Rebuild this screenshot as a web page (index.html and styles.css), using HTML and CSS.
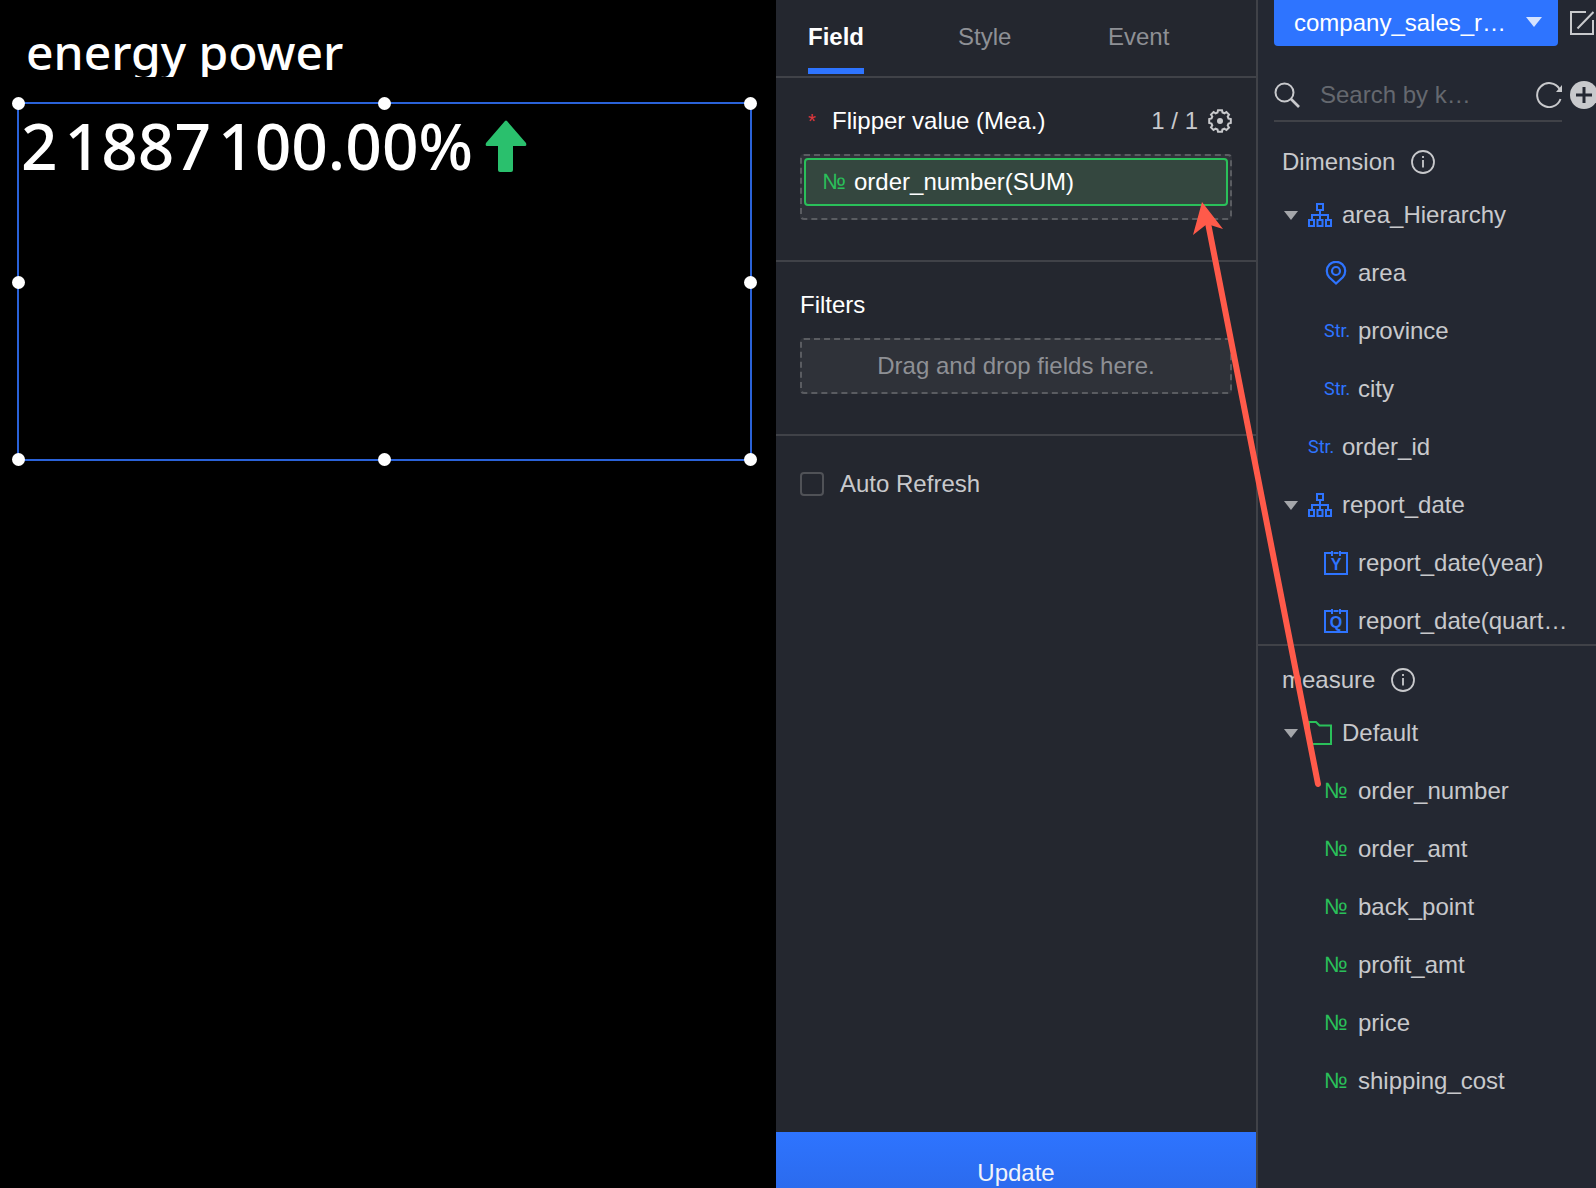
FILE: index.html
```html
<!DOCTYPE html>
<html lang="en">
<head>
	<meta charset="UTF-8">
	<title>Flipper chart editor</title>
	<link rel="stylesheet" href="styles.css">
</head>
<body>
	<!-- shared icons -->
	<svg class="sprite" aria-hidden="true">
		<symbol id="i-tree" viewBox="0 0 24 24">
			<path d="M9 1h6v6H9zM1 17h5v6H1zM9.500 17h5v6h-5zM18 17h5v6h-5zM12 7v10M4 17v-5h16v5" fill="none" stroke="currentColor" stroke-width="2"/>
		</symbol>
		<symbol id="i-pin" viewBox="0 0 24 24">
			<path d="M12 22.500L5.200 16.200A9.200 9.200 0 1 1 18.800 16.200z" fill="none" stroke="currentColor" stroke-width="2.200"/>
			<circle cx="12" cy="10" r="4" fill="none" stroke="currentColor" stroke-width="2.200"/>
		</symbol>
		<symbol id="i-cal" viewBox="0 0 24 24">
			<path d="M7 2H1v21h22V2h-6M9.500 2h5M8 0v5M16 0v5" fill="none" stroke="currentColor" stroke-width="2"/>
		</symbol>
		<symbol id="i-folder" viewBox="0 0 24 24">
			<path d="M1 1h7l3.500 3.500H23V23H1z" fill="none" stroke="currentColor" stroke-width="2"/>
		</symbol>
		<symbol id="i-info" viewBox="0 0 24 24">
			<circle cx="12" cy="12" r="11" fill="none" stroke="currentColor" stroke-width="1.800"/>
			<path d="M12 10v7.500M12 6v2" stroke="currentColor" stroke-width="1.800"/>
		</symbol>
	</svg>

	<div class="editor">
		<main class="canvas">
			<h1 class="title">energy power</h1>
			<div class="widget">
				<div class="flipper">
					<span>2</span><span>1887</span><span>100.00%</span>
					<svg class="up" viewBox="0 0 42 52"><path d="M20 1q1-1 2 0l19 22q1 3-1 3H28v24q0 2-2 2H15q-2 0-2-2V26H2q-2 0-1-3z" fill="#2ac06d"/></svg>
				</div>
				<i class="dot t l"></i><i class="dot t c"></i><i class="dot t r"></i>
				<i class="dot m l"></i><i class="dot m r"></i>
				<i class="dot b l"></i><i class="dot b c"></i><i class="dot b r"></i>
			</div>
		</main>

		<section class="panel">
			<nav class="tabs">
				<a class="on" href="#">Field</a>
				<a href="#">Style</a>
				<a href="#">Event</a>
			</nav>
			<div class="block">
				<div class="block-head">
					<span class="star">*</span>
					<h2>Flipper value (Mea.)</h2>
					<span class="count">1 / 1</span>
					<button class="icon-btn" type="button" aria-label="Settings">
						<svg viewBox="0 0 24 24"><path d="M9.500 3.500L10 1.200h4l.5 2.300 2 .8L18.400 3 21 5.600l-1.300 2 .8 2 2.300.4v4l-2.300.5-.8 2 1.300 2-2.600 2.500-2-1.300-2 .8-.4 2.300h-4l-.5-2.300-2-.8-2 1.300L3 18.400l1.300-2-.8-1.900L1.200 14v-4l2.300-.5.8-2L3 5.600 5.600 3l2 1.300z" fill="none" stroke="currentColor" stroke-width="2"/><circle cx="12" cy="12" r="3" fill="currentColor"/></svg>
					</button>
				</div>
				<div class="drop filled">
					<div class="pill"><span class="no">№</span>order_number(SUM)</div>
				</div>
			</div>
			<div class="block">
				<div class="block-head">
					<h2>Filters</h2>
				</div>
				<div class="drop">Drag and drop fields here.</div>
			</div>
			<label class="refresh"><input type="checkbox">Auto Refresh</label>
			<button class="update" type="button">Update</button>
		</section>

		<aside class="side">
			<div class="source">
				<div class="picker">
					<select aria-label="Dataset">
						<option>company_sales_r…</option>
					</select>
				</div>
				<button class="icon-btn" type="button" aria-label="Edit dataset">
					<svg viewBox="0 0 24 24"><path d="M16 1H1v22h22V9M7.500 17.500L23.500 1" fill="none" stroke="currentColor" stroke-width="2"/></svg>
				</button>
			</div>
			<div class="search">
				<svg class="glass" viewBox="0 0 26 26"><circle cx="10.500" cy="10.500" r="9" fill="none" stroke="currentColor" stroke-width="2"/><path d="M17 17l8 8" stroke="currentColor" stroke-width="2.600"/></svg>
				<input type="text" placeholder="Search by k…" aria-label="Search">
				<button class="icon-btn" type="button" aria-label="Refresh">
					<svg viewBox="0 0 26 26"><path d="M23.500 7A12 12 0 1 0 24.500 17" fill="none" stroke="currentColor" stroke-width="2"/><path d="M26 3v7h-6z" fill="currentColor"/></svg>
				</button>
				<button class="icon-btn add" type="button" aria-label="Add">
					<svg viewBox="0 0 28 28"><circle cx="14" cy="14" r="14" fill="currentColor"/><path d="M14 6v16M6 14h16" stroke="#242832" stroke-width="3"/></svg>
				</button>
			</div>

			<section class="fields dims">
				<h2>Dimension <svg><use href="#i-info"/></svg></h2>
				<ul>
					<li><button class="caret" type="button" aria-label="Toggle"></button><svg><use href="#i-tree"/></svg><span>area_Hierarchy</span></li>
					<li class="sub"><svg><use href="#i-pin"/></svg><span>area</span></li>
					<li class="sub"><b class="str">Str.</b><span>province</span></li>
					<li class="sub"><b class="str">Str.</b><span>city</span></li>
					<li class="leaf"><b class="str">Str.</b><span>order_id</span></li>
					<li><button class="caret" type="button" aria-label="Toggle"></button><svg><use href="#i-tree"/></svg><span>report_date</span></li>
					<li class="sub"><svg viewBox="0 0 24 24"><use href="#i-cal"/><text x="12" y="19">Y</text></svg><span>report_date(year)</span></li>
					<li class="sub"><svg viewBox="0 0 24 24"><use href="#i-cal"/><text x="12" y="19">Q</text></svg><span>report_date(quart…</span></li>
				</ul>
			</section>
			<section class="fields meas">
				<h2>measure <svg><use href="#i-info"/></svg></h2>
				<ul>
					<li><button class="caret" type="button" aria-label="Toggle"></button><svg><use href="#i-folder"/></svg><span>Default</span></li>
					<li class="sub"><b class="no">№</b><span>order_number</span></li>
					<li class="sub"><b class="no">№</b><span>order_amt</span></li>
					<li class="sub"><b class="no">№</b><span>back_point</span></li>
					<li class="sub"><b class="no">№</b><span>profit_amt</span></li>
					<li class="sub"><b class="no">№</b><span>price</span></li>
					<li class="sub"><b class="no">№</b><span>shipping_cost</span></li>
				</ul>
			</section>
		</aside>

		<!-- drag hint, from the measure to the drop area -->
		<svg class="hint" viewBox="0 0 140 600">
			<path d="M24 23L134 584" stroke="#ff5a4a" stroke-width="6" stroke-linecap="round"/>
			<path d="M18 2L39 29 23 24 9 35z" fill="#ff5a4a"/>
		</svg>
	</div>
</body>
</html>
```
FILE: styles.css
```css
*{
	box-sizing: border-box;
}
body, h1, h2, ul, li{
	margin: 0;
	padding: 0;
	font-weight: normal;
}
body{
	background: #000;
	color: #c8c9cc;
	font: 24px/28px "Liberation Sans", Arial, sans-serif;
	overflow: hidden;
}
h2{
	font-size: 24px;
}
ul{
	list-style: none;
}
a{
	text-decoration: none;
}
button, input, select{
	margin: 0;
	padding: 0;
	border: 0;
	background: none;
	color: inherit;
	font: inherit;
}
.sprite{
	display: none;
}
.editor{
	position: relative;
	display: flex;
	height: 100vh;
}

/* canvas */
.canvas{
	flex: 1;
	min-width: 0;
	padding: 26px 24px 0 17px;
	font-family: "Noto Sans", sans-serif;
	color: #fff;
}
.title{
	height: 51px;
	margin-bottom: 25px;
	padding-left: 9px;
	font-size: 48px;
	line-height: 52px;
	font-weight: 500;
	overflow: hidden;
}
.widget{
	position: relative;
	height: 359px;
	border: 2px solid #2a62d8;
}
.flipper{
	display: flex;
	align-items: center;
	gap: 7px;
	height: 84px;
	padding-left: 2px;
	font-size: 64px;
	line-height: 84px;
	font-weight: 500;
}
.up{
	width: 42px;
	height: 52px;
	margin-left: 5px;
}
.dot{
	position: absolute;
	width: 13px;
	height: 13px;
	border-radius: 50%;
	background: #fff;
}
.t{ top: -7px; }
.m{ top: calc(50% - 6px); }
.b{ bottom: -7px; }
.l{ left: -7px; }
.c{ left: calc(50% - 7px); }
.r{ right: -7px; }

/* settings panel */
.panel{
	display: flex;
	flex-direction: column;
	width: 480px;
	background: #24272f;
}
.tabs{
	display: grid;
	grid-template-columns: repeat(3, 150px);
	height: 78px;
	padding: 0 32px;
	border-bottom: 2px solid #404248;
}
.tabs a{
	justify-self: start;
	height: 74px;
	line-height: 74px;
	color: #8e9095;
}
.tabs .on{
	border-bottom: 6px solid #2e74ff;
	color: #fff;
	font-weight: bold;
}
.block{
	padding: 29px 24px 40px;
	border-bottom: 2px solid #404248;
}
.block-head{
	display: flex;
	align-items: center;
	gap: 10px;
	margin-bottom: 19px;
}
.block-head h2{
	flex: 1;
	color: #fff;
}
.star{
	width: 22px;
	padding-left: 8px;
	color: #e0383e;
	font-size: 20px;
}
.icon-btn{
	flex: none;
	width: 24px;
	height: 24px;
	cursor: pointer;
}
.icon-btn svg{
	display: block;
	width: 100%;
	height: 100%;
}
.drop{
	border: 2px dashed #5a5c61;
	border-radius: 4px;
	background: #2f3239;
	color: #8e9095;
	line-height: 52px;
	text-align: center;
}
.drop.filled{
	padding: 2px 2px 12px;
}
.pill{
	display: flex;
	align-items: center;
	gap: 8px;
	height: 48px;
	padding-left: 16px;
	border: 2px solid #2ac05a;
	border-radius: 4px;
	background: #34473f;
	color: #fff;
}
.no, .str{
	flex: none;
	width: 24px;
	color: #2ac05a;
	font-size: 22px;
	font-weight: normal;
}
.str{
	color: #2e74ff;
	font-family: Roboto, sans-serif;
	font-size: 18px;
}
.refresh{
	display: flex;
	align-items: center;
	gap: 16px;
	margin: 34px 24px;
}
.refresh input{
	width: 24px;
	height: 24px;
	border: 2px solid #505257;
	border-radius: 4px;
	appearance: none;
}
.update{
	height: 56px;
	margin-top: auto;
	padding-top: 26px;
	background: linear-gradient(#2e74ff, #2b6bee);
	color: #f0f3fa;
	cursor: pointer;
}

/* field list */
.side{
	display: flex;
	flex-direction: column;
	width: 340px;
	border-left: 2px solid #404248;
	background: #242832;
	overflow: hidden;
}
.source{
	display: flex;
	align-items: center;
	gap: 12px;
	height: 46px;
	padding-left: 16px;
}
.picker{
	position: relative;
	width: 284px;
	height: 46px;
}
.picker select{
	width: 100%;
	height: 100%;
	padding-left: 20px;
	border-radius: 0 0 4px 4px;
	background: #2e74ff;
	color: #fff;
	appearance: none;
}
.picker::after{
	content: "";
	position: absolute;
	top: 17px;
	right: 16px;
	border: 8px solid transparent;
	border-top: 10px solid #d5e3ff;
	border-bottom: 0;
	pointer-events: none;
}
.search{
	display: flex;
	align-items: center;
	gap: 8px;
	width: 288px;
	height: 76px;
	margin-left: 16px;
	padding-top: 24px;
	border-bottom: 2px solid #404248;
}
.search .glass{
	flex: none;
	width: 26px;
	height: 26px;
}
.search input{
	flex: 1;
	min-width: 0;
	padding-left: 12px;
	outline: 0;
}
.search input::placeholder{
	color: #65686f;
}
.search .icon-btn{
	width: 26px;
	height: 26px;
}
.search .add{
	width: 28px;
	height: 28px;
	margin-right: -36px;
}
.fields svg{
	flex: none;
	width: 24px;
	height: 24px;
}
.fields h2{
	display: flex;
	align-items: center;
	gap: 16px;
	height: 48px;
	padding-left: 24px;
}
.dims{
	height: 524px;
	padding-top: 16px;
	border-bottom: 2px solid #404248;
	overflow: hidden;
}
.meas{
	padding-top: 10px;
}
.fields li{
	display: flex;
	align-items: center;
	gap: 10px;
	height: 58px;
	padding-left: 26px;
	white-space: nowrap;
}
.fields .leaf{
	padding-left: 50px;
}
.fields .sub{
	padding-left: 66px;
}
.fields svg{
	color: #2e74ff;
}
.fields h2 svg{
	color: #c8c9cc;
}
.meas li svg{
	color: #2ac05a;
}
.fields text{
	fill: #2e74ff;
	font: bold 16px "Liberation Sans", sans-serif;
	text-anchor: middle;
}
.caret{
	border: 7px solid transparent;
	border-top: 9px solid #a4a6aa;
	border-bottom: 0;
	cursor: pointer;
}

.hint{
	position: absolute;
	top: 200px;
	right: 272px;
	width: 140px;
	height: 600px;
	fill: none;
	pointer-events: none;
}
```
